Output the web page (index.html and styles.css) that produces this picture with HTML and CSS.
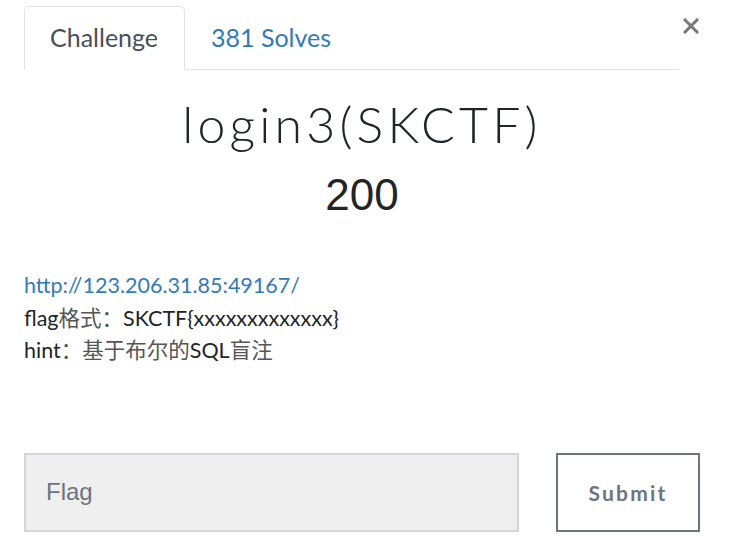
FILE: index.html
```html
<!DOCTYPE html>
<html>
<head>
<meta charset="utf-8">
<link rel="stylesheet" href="styles.css">
</head>
<body>
<div class="modal">
  <button class="close" aria-label="Close">
    <svg width="16" height="16" viewBox="0 0 16 16"><path d="M2 2 L14 14 M14 2 L2 14" stroke="#777" stroke-width="3" stroke-linecap="square"/></svg>
  </button>
  <nav class="tabs">
    <a class="tab active">Challenge</a>
    <a class="tab">381 Solves</a>
  </nav>
  <div class="head">
    <h2 class="title">login3(SKCTF)</h2>
    <h3 class="value">200</h3>
  </div>
  <div class="desc">
    <a class="link">http://123.206.31.85:49167/</a><br>
    flag<span class="cjk">格式：</span>SKCTF{xxxxxxxxxxxxx}<br>
    hint<span class="cjk">：基于布尔的</span>SQL<span class="cjk">盲注</span>
  </div>
  <form class="submit-row">
    <input class="flag" type="text" placeholder="Flag">
    <button type="button" class="btn">Submit</button>
  </form>
</div>
</body>
</html>
```
FILE: styles.css
```css
html, body {
  margin: 0;
  padding: 0;
  background: #fff;
}
body {
  font-family: Lato, "Noto Sans CJK SC", sans-serif;
  color: #212529;
}
.modal {
  position: relative;
  padding: 6px 30px 0 24px;
}
.close {
  position: absolute;
  top: 18px;
  right: 31px;
  border: 0;
  background: none;
  padding: 0;
  width: 16px;
  height: 16px;
  display: block;
}
.close svg { display: block; }
.tabs {
  display: flex;
  border-bottom: 1px solid #dee2e6;
  margin-right: 21px;
  height: 63px;
}
.tab {
  display: flex;
  align-items: center;
  font-size: 25px;
  padding: 0 26px 3px 25px;
  color: #337ab7;
  border: 1px solid transparent;
  border-top-left-radius: 5px;
  border-top-right-radius: 5px;
  margin-bottom: -1px;
}
.tab.active {
  color: #495057;
  border-color: #dee2e6 #dee2e6 #fff;
  background: #fff;
}
.head {
  text-align: center;
  margin-top: 24px;
}
.title {
  margin: 0;
  font-weight: 300;
  font-size: 50px;
  letter-spacing: 4.2px;
  line-height: 60px;
  color: #212529;
}
.value {
  margin: 14px 0 0;
  font-family: "Liberation Sans", Arial, sans-serif;
  font-weight: 400;
  font-size: 44px;
  line-height: 54px;
  color: #212529;
}
.desc {
  margin-top: 47px;
  font-size: 21.5px;
  line-height: 32.5px;
  color: #212529;
}
.cjk {
  color: #555;
}
.link {
  color: #337ab7;
}
.submit-row {
  display: flex;
  justify-content: space-between;
  margin-top: 86px;
}
.flag {
  box-sizing: border-box;
  width: 495px;
  height: 79px;
  border: 2px solid #d2d6da;
  background: #efefef;
  padding: 0 20px;
  font-family: "Liberation Sans", Arial, sans-serif;
  font-size: 24px;
  color: #495057;
  outline: none;
}
.flag::placeholder {
  color: #6c757d;
}
.btn {
  box-sizing: border-box;
  width: 144px;
  height: 79px;
  border: 2px solid #6c757d;
  background: #fff;
  color: #6c757d;
  font-family: Lato, sans-serif;
  font-weight: 700;
  font-size: 21px;
  letter-spacing: 2.2px;
}
```
